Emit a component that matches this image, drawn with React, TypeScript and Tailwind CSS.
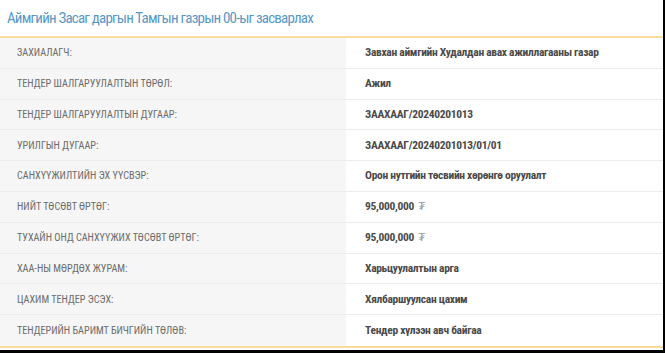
import React from 'react';

const rows: { label: string; value: string; money?: boolean }[] = [
  { label: 'ЗАХИАЛАГЧ:', value: 'Завхан аймгийн Худалдан авах ажиллагааны газар' },
  { label: 'ТЕНДЕР ШАЛГАРУУЛАЛТЫН ТӨРӨЛ:', value: 'Ажил' },
  { label: 'ТЕНДЕР ШАЛГАРУУЛАЛТЫН ДУГААР:', value: 'ЗААХААГ/20240201013' },
  { label: 'УРИЛГЫН ДУГААР:', value: 'ЗААХААГ/20240201013/01/01' },
  { label: 'САНХҮҮЖИЛТИЙН ЭХ ҮҮСВЭР:', value: 'Орон нутгийн төсвийн хөрөнгө оруулалт' },
  { label: 'НИЙТ ТӨСӨВТ ӨРТӨГ:', value: '95,000,000', money: true },
  { label: 'ТУХАЙН ОНД САНХҮҮЖИХ ТӨСӨВТ ӨРТӨГ:', value: '95,000,000', money: true },
  { label: 'ХАА-НЫ МӨРДӨХ ЖУРАМ:', value: 'Харьцуулалтын арга' },
  { label: 'ЦАХИМ ТЕНДЕР ЭСЭХ:', value: 'Хялбаршуулсан цахим' },
  { label: 'ТЕНДЕРИЙН БАРИМТ БИЧГИЙН ТӨЛӨВ:', value: 'Тендер хүлээн авч байгаа' },
];

const App: React.FC = () => {
  return (
    <div className="w-[665px] h-[353px] bg-black overflow-hidden">
      <div
        className="w-[663px] h-[350px] bg-white flex flex-col"
        style={{ fontFamily: '"Roboto Condensed", "Liberation Sans Narrow", Roboto, sans-serif' }}
      >
        {/* Title */}
        <div className="h-[36px] px-[7px] pt-[8px] text-[15px] leading-[20px] text-[#5898c6] tracking-[-0.8px] whitespace-nowrap">
          Аймгийн Засаг даргын Тамгын газрын 00-ыг засварлах
        </div>
        <div className="h-[2px] bg-[#f7dc9c]" />

        {/* Table */}
        <div className="flex flex-col">
          {rows.map((r, i) => (
            <div
              key={i}
              className={`flex h-[30.8px] ${i < rows.length - 1 ? 'border-b border-[#ececec]' : ''}`}
            >
              <div className="w-[346px] bg-[#f6f6f6] pl-[17px] flex items-center text-[10.2px] text-[#6b6b6b] uppercase whitespace-nowrap">
                {r.label}
              </div>
              <div className="flex-1 pl-[19px] flex items-center text-[11.5px] font-bold text-[#4a4a4a] tracking-[-0.3px] whitespace-nowrap">
                {r.value}
                {r.money && <span className="ml-[4px] font-normal text-[#9a9a9a]">₮</span>}
              </div>
            </div>
          ))}
        </div>
        <div className="h-[2px] bg-[#f7dc9c]" />
      </div>
    </div>
  );
};

export default App;
